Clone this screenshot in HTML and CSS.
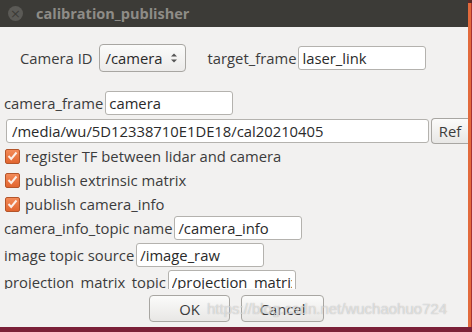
FILE: index.html
```html
<!DOCTYPE html>
<html lang="en">
<head>
    <meta charset="UTF-8">
    <title>calibration_publisher</title>
    <link rel="stylesheet" href="styles.css">
</head>
<body>
    <div class="screen">
        <div class="window">
            <div class="titlebar">
                <span class="close">&times;</span>
                <span class="title">calibration_publisher</span>
            </div>
            <div class="content">
                <div class="form">
                    <div class="row row-top">
                        <label class="lbl">Camera ID</label>
                        <div class="combo">
                            <span>/camera</span>
                            <svg class="spin" width="8" height="12" viewBox="0 0 8 12">
                                <path d="M1 4.5 L4 1.5 L7 4.5 Z" fill="#555"/>
                                <path d="M1 7.5 L4 10.5 L7 7.5 Z" fill="#555"/>
                            </svg>
                        </div>
                        <label class="lbl lbl-target">target_frame</label>
                        <input class="field" type="text" value="laser_link">
                    </div>
                    <div class="row row-frame">
                        <label class="lbl">camera_frame</label>
                        <input class="field" type="text" value="camera">
                    </div>
                    <div class="row row-path">
                        <input class="field path" type="text" value="/media/wu/5D12338710E1DE18/cal20210405">
                        <button class="btn ref">Ref</button>
                    </div>
                    <div class="check">
                        <span class="box"><svg width="11" height="10" viewBox="0 0 11 10"><path d="M1.5 5 L4.2 8 L9.5 1.5" fill="none" stroke="#fbeee7" stroke-width="2"/></svg></span>
                        register TF between lidar and camera
                    </div>
                    <div class="check">
                        <span class="box"><svg width="11" height="10" viewBox="0 0 11 10"><path d="M1.5 5 L4.2 8 L9.5 1.5" fill="none" stroke="#fbeee7" stroke-width="2"/></svg></span>
                        publish extrinsic matrix
                    </div>
                    <div class="check">
                        <span class="box"><svg width="11" height="10" viewBox="0 0 11 10"><path d="M1.5 5 L4.2 8 L9.5 1.5" fill="none" stroke="#fbeee7" stroke-width="2"/></svg></span>
                        publish camera_info
                    </div>
                    <div class="row row-topic">
                        <label class="lbl">camera_info_topic name</label>
                        <input class="field" type="text" value="/camera_info">
                    </div>
                    <div class="row row-topic">
                        <label class="lbl">image topic source</label>
                        <input class="field" type="text" value="/image_raw">
                    </div>
                    <div class="row row-topic">
                        <label class="lbl">projection_matrix_topic</label>
                        <input class="field" type="text" value="/projection_matrix">
                    </div>
                </div>
                <div class="actions">
                    <button class="btn ok">OK</button>
                    <button class="btn cancel">Cancel</button>
                </div>
                <div class="watermark">https://blog.csdn.net/wuchaohuo724</div>
            </div>
        </div>
        <div class="edge"></div>
    </div>
    <div class="bottom"></div>
</body>
</html>
```

FILE: styles.css
```css
* {
    margin: 0;
    padding: 0;
    box-sizing: border-box;
}

body {
    width: 472px;
    height: 332px;
    overflow: hidden;
    background: #7b2038;
    font-family: 'Open Sans', 'DejaVu Sans', sans-serif;
    font-size: 14.8px;
    color: #3c3c3c;
}

.screen {
    display: flex;
    height: 327px;
}

.window {
    flex: 1;
    display: flex;
    flex-direction: column;
    background: #f2f1f0;
}

.edge {
    width: 5px;
    background: linear-gradient(90deg, #e36a3c 0, #e36a3c 3px, #a8322e 3px);
    border-top: 3px solid #5a2a28;
}

.titlebar {
    height: 27px;
    background: #3c3b37;
    display: flex;
    align-items: center;
    padding-left: 8px;
}

.close {
    width: 15px;
    height: 15px;
    border-radius: 50%;
    background: #5b5a56;
    color: #3c3b37;
    font-size: 13px;
    line-height: 15px;
    text-align: center;
    font-family: 'DejaVu Sans', sans-serif;
}

.title {
    margin-left: 13px;
    color: #8e8c87;
    font-weight: bold;
    font-size: 14.5px;
}

.content {
    flex: 1;
    position: relative;
    display: flex;
    flex-direction: column;
}

.form {
    height: 262px;
    overflow: hidden;
}

.row {
    display: flex;
    align-items: center;
    padding-left: 4px;
}

.row-top {
    margin-top: 17px;
    height: 28px;
    padding-left: 20px;
}

.lbl {
    margin-right: 2px;
    white-space: nowrap;
}

.combo {
    margin-left: 4px;
    width: 87px;
    height: 28px;
    border: 1px solid #a8a6a2;
    border-radius: 4px;
    background: linear-gradient(#fbfbfa, #ecebea);
    display: flex;
    align-items: center;
    justify-content: space-between;
    padding: 0 7px 0 6px;
    color: #2a2a2a;
}

.lbl-target {
    margin-left: 22px;
}

.field {
    width: 128px;
    height: 24px;
    border: 1px solid #b4b2ae;
    border-radius: 3px;
    background: #fff;
    font-family: inherit;
    font-size: 14.8px;
    color: #2a2a2a;
    padding: 0 3px;
    outline: none;
}

.row-frame {
    margin-top: 19px;
    height: 24px;
}

.row-path {
    margin-top: 3px;
    height: 26px;
    padding-left: 6px;
}

.path {
    width: 423px;
    padding-left: 5px;
}

.btn {
    font-family: inherit;
    font-size: 14.8px;
    color: #3c3c3c;
    border: 1px solid #a8a6a2;
    border-radius: 4px;
    background: linear-gradient(#fbfbfa, #e8e7e5);
}

.ref {
    margin-left: 2px;
    width: 37px;
    height: 26px;
    border-right: none;
    border-radius: 4px 0 0 4px;
}

.check {
    height: 24px;
    display: flex;
    align-items: center;
    padding-left: 5px;
}

.box {
    width: 15px;
    height: 15px;
    margin-right: 5px;
    border: 1px solid #b4552a;
    border-radius: 2px;
    background: linear-gradient(#f38a58, #e2652f);
    display: flex;
    align-items: center;
    justify-content: center;
}

.row-topic {
    height: 24px;
    margin-bottom: 3px;
}

.row-topic:first-of-type {
    margin-top: 1px;
}

.actions {
    display: flex;
    justify-content: center;
    gap: 11px;
    margin-top: 6px;
    padding-left: 5px;
}

.ok {
    width: 81px;
    height: 27px;
}

.cancel {
    width: 83px;
    height: 27px;
}

.watermark {
    position: absolute;
    left: 207px;
    top: 273px;
    font-family: 'Liberation Sans', sans-serif;
    font-size: 15px;
    color: rgba(255, 255, 255, 0.55);
    text-shadow: 0 0 1px rgba(120, 120, 120, 0.6);
    white-space: nowrap;
}

.bottom {
    height: 5px;
    background: #7b2038;
}
```
